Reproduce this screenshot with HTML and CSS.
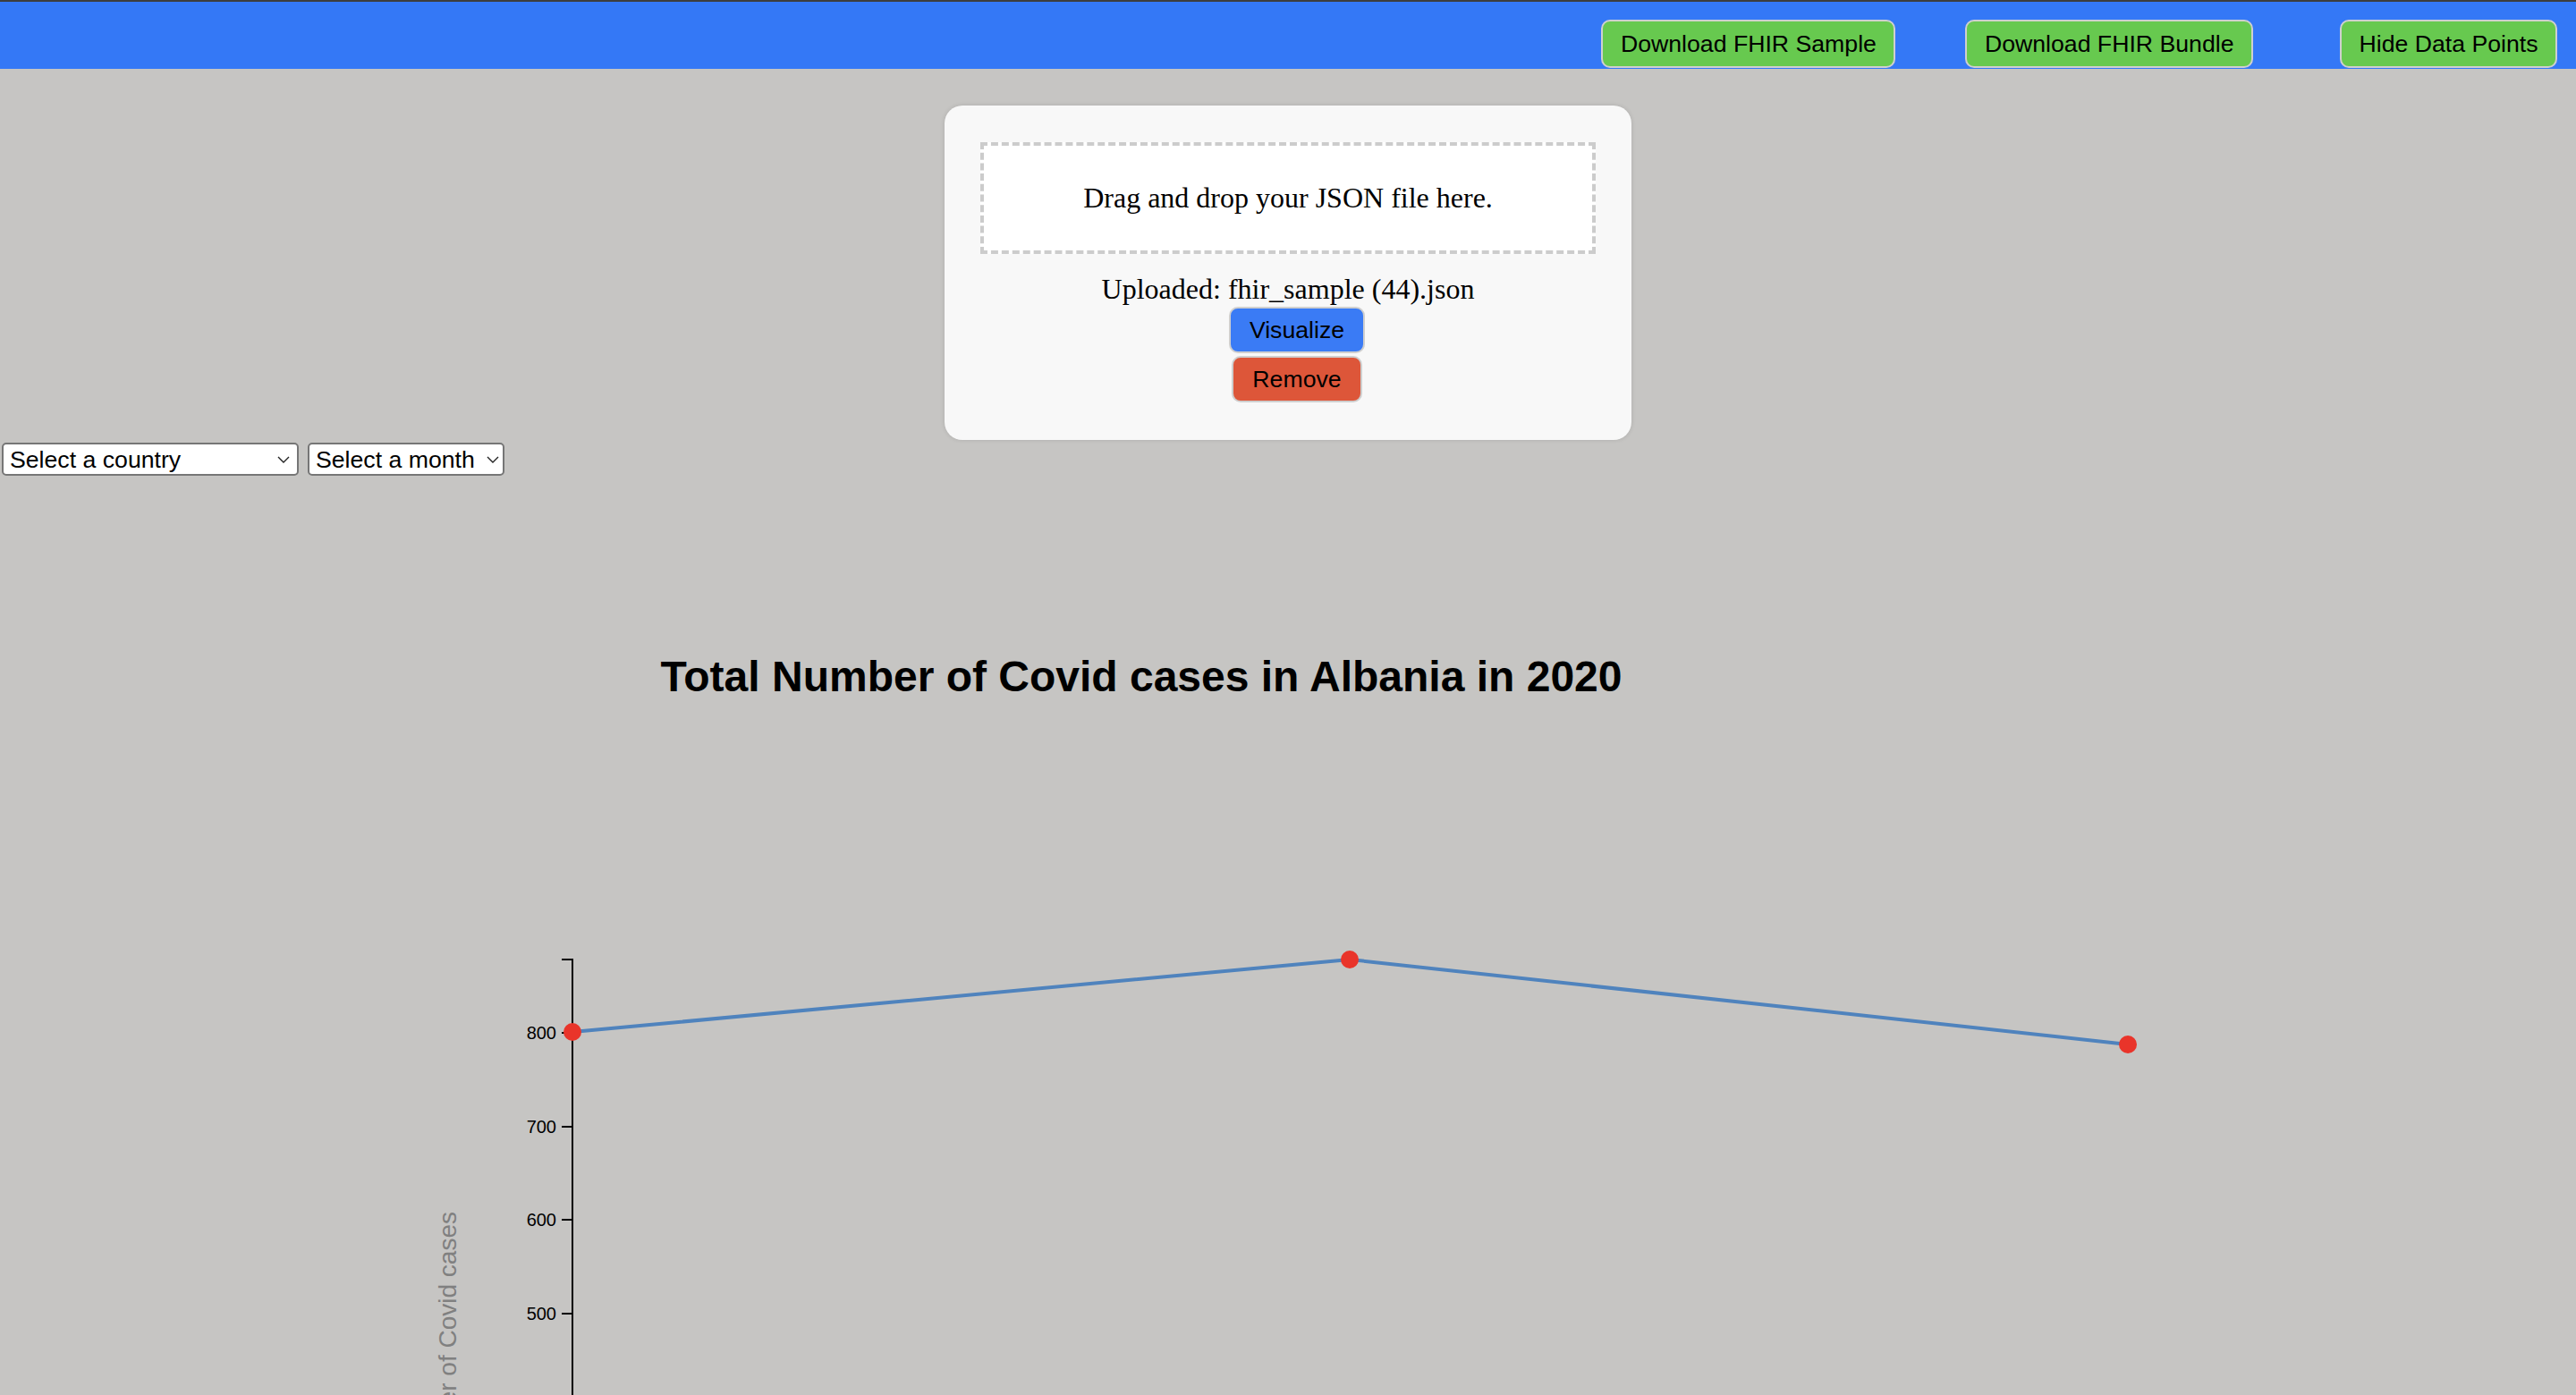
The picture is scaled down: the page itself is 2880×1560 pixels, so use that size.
FILE: index.html
```html
<!DOCTYPE html>
<html lang="en">
<head>
<meta charset="utf-8">
<title>FHIR Covid Visualizer</title>
<link rel="stylesheet" href="styles.css">
</head>
<body>
<header class="topbar">
  <button class="btn btn-green">Download FHIR Sample</button>
  <button class="btn btn-green btn-bundle">Download FHIR Bundle</button>
  <button class="btn btn-green btn-hide">Hide Data Points</button>
</header>
<main class="page">
  <section class="card">
    <div class="dropzone">Drag and drop your JSON file here.</div>
    <p class="uploaded">Uploaded: fhir_sample (44).json</p>
    <div class="actions">
      <button class="btn btn-blue">Visualize</button>
      <button class="btn btn-red">Remove</button>
    </div>
  </section>
  <div class="filters">
    <div class="select-wrap">
      <select class="select select-country"><option>Select a country</option></select>
      <svg class="chev chev-country" width="14" height="8" viewBox="0 0 14 8"><polyline points="1,1 7,7 13,1"/></svg>
    </div>
    <div class="select-wrap">
      <select class="select select-month"><option>Select a month</option></select>
      <svg class="chev chev-month" width="14" height="8" viewBox="0 0 14 8"><polyline points="1,1 7,7 13,1"/></svg>
    </div>
  </div>
  <svg class="chart" width="2880" height="1029" viewBox="0 531 2880 1029">
    <text class="chart-title" x="1276" y="772" text-anchor="middle">Total Number of Covid cases in Albania in 2020</text>
    <g class="axis">
      <path class="domain" d="M628,1072H640V1700"/>
      <line x1="628" x2="640" y1="1154" y2="1154"/>
      <line x1="628" x2="640" y1="1259" y2="1259"/>
      <line x1="628" x2="640" y1="1363" y2="1363"/>
      <line x1="628" x2="640" y1="1468" y2="1468"/>
      <text class="tick" x="622" y="1161" text-anchor="end">800</text>
      <text class="tick" x="622" y="1266" text-anchor="end">700</text>
      <text class="tick" x="622" y="1370" text-anchor="end">600</text>
      <text class="tick" x="622" y="1475" text-anchor="end">500</text>
    </g>
    <text class="axis-label" transform="translate(510,1354) rotate(-90)" text-anchor="end">Number of Covid cases</text>
    <polyline class="series" points="640,1153 1509,1072 2379,1167"/>
    <circle class="dot" cx="640" cy="1153" r="10"/>
    <circle class="dot" cx="1509" cy="1072" r="10"/>
    <circle class="dot" cx="2379" cy="1167" r="10"/>
  </svg>
</main>
</body>
</html>
```

FILE: styles.css
```css
html {
  overflow: hidden;
}

body {
  margin: 0;
  background: #c6c5c3;
  font-family: "Liberation Serif", "Times New Roman", serif;
  font-size: 32px;
  color: #000;
}

.topbar {
  display: flex;
  justify-content: flex-end;
  align-items: flex-start;
  border-top: 2px solid #3d3d3d;
  background: #3478f6;
  padding: 20px 21px 0 0;
  box-sizing: border-box;
  height: 77px;
}

.btn {
  font-family: "Liberation Sans", Arial, sans-serif;
  font-size: 26.67px;
  line-height: 30px;
  color: #000;
  border: 2px solid #cfcfcf;
  border-radius: 10px;
  padding: 10px 19.5px;
  margin: 0;
  cursor: pointer;
}

.btn-green {
  background: #67c94f;
}

.btn-bundle {
  margin-left: 78px;
}

.btn-hide {
  margin-left: 97px;
}

.page {
  display: block;
}

.card {
  width: 768px;
  box-sizing: border-box;
  margin: 41px auto 0;
  padding: 41px 40px 42px;
  background: #f8f8f8;
  border-radius: 20px;
  box-shadow: 0 0 5px rgba(0, 0, 0, 0.12);
  display: flex;
  flex-direction: column;
  align-items: center;
}

.dropzone {
  width: 100%;
  box-sizing: border-box;
  border: 4px dashed #cccccc;
  background: #ffffff;
  padding: 40px 10px;
  line-height: 37px;
  text-align: center;
}

.uploaded {
  margin: 21px 0 0;
  line-height: 37px;
}

.actions {
  display: flex;
  flex-direction: column;
  align-items: center;
  gap: 3px;
  margin-top: 1px;
  margin-left: 20px;
}

.btn-blue {
  background: #3a7bf5;
  padding: 9px 21px;
}

.btn-red {
  background: #dd5639;
  padding: 9px 21.5px;
}

.filters {
  display: flex;
  gap: 10px;
  margin-top: 3px;
  padding-left: 2px;
  height: 37px;
}

.select-wrap {
  position: relative;
  display: flex;
}

.select {
  appearance: none;
  -webkit-appearance: none;
  box-sizing: border-box;
  height: 37px;
  margin: 0;
  border: 2px solid #767676;
  border-radius: 5px;
  background: #ffffff;
  color: #000;
  font-family: "Liberation Sans", Arial, sans-serif;
  font-size: 26.67px;
  padding: 0 28px 0 7px;
}

.select-country {
  width: 332px;
}

.select-month {
  width: 220px;
}

.chev {
  position: absolute;
  top: 15px;
  fill: none;
  stroke: #222;
  stroke-width: 1.4;
  pointer-events: none;
}

.chev-country {
  right: 10px;
}

.chev-month {
  right: 6px;
}

.chart {
  display: block;
}

.chart-title {
  font-family: "Liberation Sans", Arial, sans-serif;
  font-size: 48px;
  font-weight: bold;
  fill: #000;
}

.axis .domain,
.axis line {
  fill: none;
  stroke: #000;
  stroke-width: 2;
}

.tick {
  font-family: "Liberation Sans", Arial, sans-serif;
  font-size: 20px;
  fill: #000;
}

.axis-label {
  font-family: "Liberation Sans", Arial, sans-serif;
  font-size: 28px;
  fill: #808080;
}

.series {
  fill: none;
  stroke: #4f83bd;
  stroke-width: 4;
}

.dot {
  fill: #e9342a;
}
```
